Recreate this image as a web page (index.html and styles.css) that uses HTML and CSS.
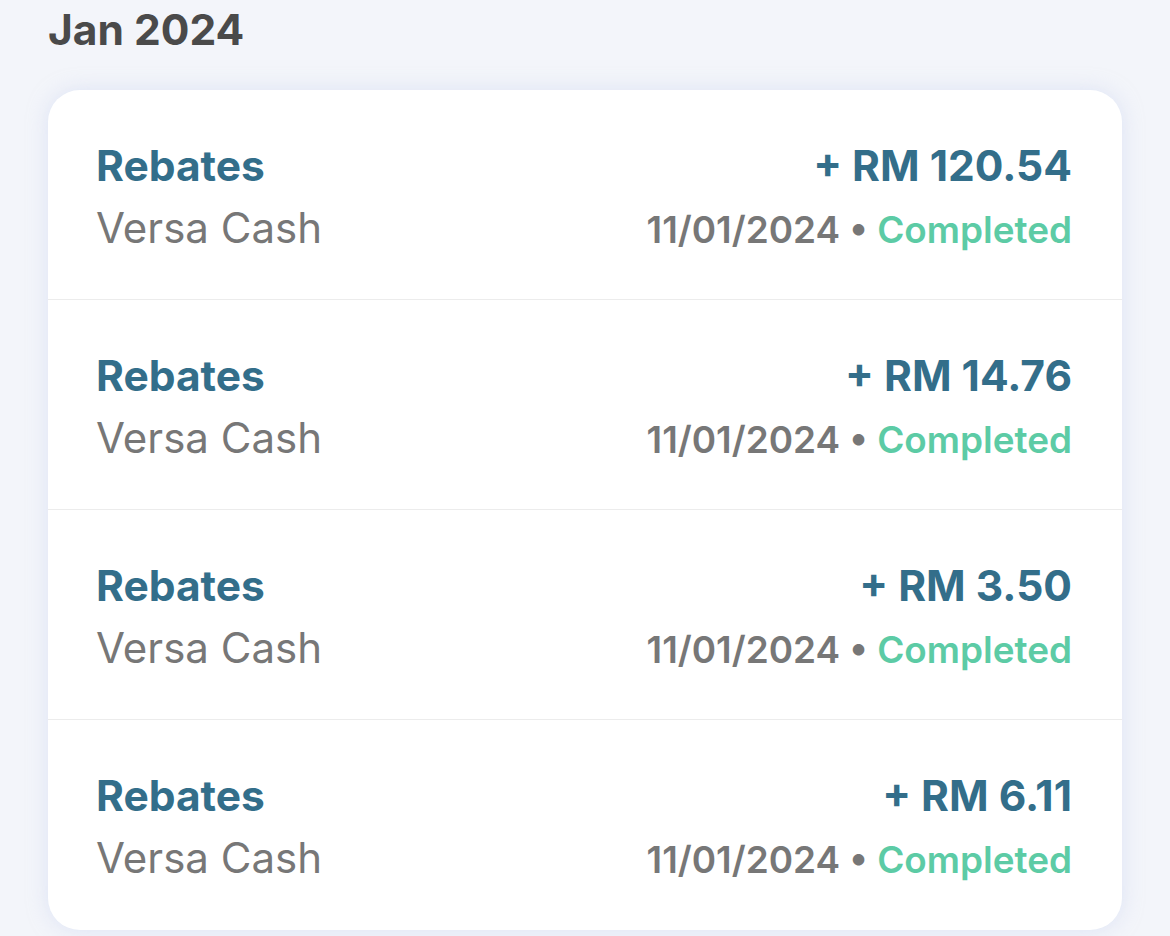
FILE: index.html
```html
<!DOCTYPE html>
<html>
<head>
<meta charset="utf-8">
<link rel="stylesheet" href="styles.css">
</head>
<body>
<div class="page">
  <h2 class="month">Jan 2024</h2>
  <div class="card">
    <div class="row">
      <div class="col left">
        <div class="title">Rebates</div>
        <div class="sub">Versa Cash</div>
      </div>
      <div class="col right">
        <div class="amount">+ RM 120.54</div>
        <div class="meta"><span class="date">11/01/2024</span> <span class="dot">•</span> <span class="status">Completed</span></div>
      </div>
    </div>
    <div class="row">
      <div class="col left">
        <div class="title">Rebates</div>
        <div class="sub">Versa Cash</div>
      </div>
      <div class="col right">
        <div class="amount">+ RM 14.76</div>
        <div class="meta"><span class="date">11/01/2024</span> <span class="dot">•</span> <span class="status">Completed</span></div>
      </div>
    </div>
    <div class="row">
      <div class="col left">
        <div class="title">Rebates</div>
        <div class="sub">Versa Cash</div>
      </div>
      <div class="col right">
        <div class="amount">+ RM 3.50</div>
        <div class="meta"><span class="date">11/01/2024</span> <span class="dot">•</span> <span class="status">Completed</span></div>
      </div>
    </div>
    <div class="row">
      <div class="col left">
        <div class="title">Rebates</div>
        <div class="sub">Versa Cash</div>
      </div>
      <div class="col right">
        <div class="amount">+ RM 6.11</div>
        <div class="meta"><span class="date">11/01/2024</span> <span class="dot">•</span> <span class="status">Completed</span></div>
      </div>
    </div>
  </div>
</div>
</body>
</html>
```
FILE: styles.css
```css
html, body {
  margin: 0;
  padding: 0;
}
body {
  background: #f3f5fa;
  font-family: Inter, "Noto Sans", sans-serif;
  width: 1170px;
  height: 936px;
  overflow: hidden;
}
.page {
  padding: 0 48px;
}
.month {
  margin: 0;
  padding-top: 4px;
  height: 90px;
  box-sizing: border-box;
  font-size: 42.5px;
  line-height: 52px;
  font-weight: 700;
  color: #4a4a4a;
}
.card {
  background: #fff;
  border-radius: 32px;
  box-shadow: 0 0 20px rgba(200, 210, 240, 0.5);
  width: 1074px;
}
.row {
  display: flex;
  justify-content: space-between;
  height: 210px;
  box-sizing: border-box;
  padding: 50px 50px 0 48px;
  border-bottom: 1px solid #ececec;
}
.row:last-child {
  border-bottom: none;
}
.col {
  display: flex;
  flex-direction: column;
}
.right {
  align-items: flex-end;
}
.title {
  font-size: 42.5px;
  line-height: 52px;
  font-weight: 700;
  color: #336e8a;
}
.sub {
  margin-top: 10px;
  font-size: 42px;
  line-height: 52px;
  color: #777777;
}
.amount {
  font-size: 42.5px;
  line-height: 52px;
  font-weight: 700;
  color: #336e8a;
}
.meta {
  margin-top: 12px;
  font-size: 36.9px;
  line-height: 52px;
  font-weight: 600;
  color: #777777;
}
.status {
  color: #5ccba5;
}
```
